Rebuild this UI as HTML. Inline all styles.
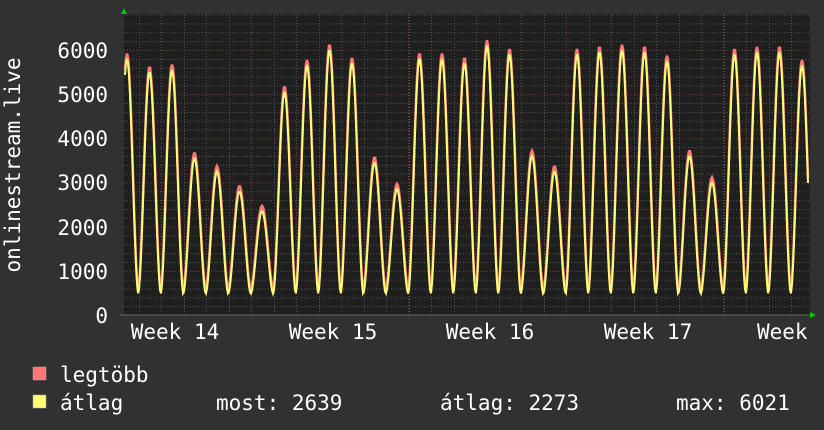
<!DOCTYPE html><html><head><meta charset="utf-8"><style>
body{margin:0;background:#313131;width:824px;height:430px;overflow:hidden}
svg{display:block}
text{font-family:"DejaVu Sans Mono","Liberation Mono",monospace;fill:#fff;font-size:21px}
</style></head><body>
<svg id="s" width="824" height="430" xmlns="http://www.w3.org/2000/svg">
<rect x="0" y="0" width="824" height="430" fill="#313131"/>
<rect x="124" y="14" width="686" height="301" fill="#1f1f1f"/>
<g id="grid"></g>
<g id="data"></g>
<polygon points="121,14 127,14 124,8" fill="#0c0"/>
<polygon points="810,312 810,318 816,315" fill="#0c0"/>
<line x1="120" y1="315" x2="810" y2="315" stroke="#666"/>
<g text-anchor="end">
<text x="108" y="58">6000</text><text x="108" y="102">5000</text><text x="108" y="146">4000</text>
<text x="108" y="190">3000</text><text x="108" y="235">2000</text><text x="108" y="279">1000</text>
<text x="108" y="323">0</text></g>
<text transform="translate(20,165) rotate(-90)" text-anchor="middle">onlinestream.live</text>
<g text-anchor="middle"><text x="175" y="339">Week 14</text><text x="333" y="339">Week 15</text>
<text x="490" y="339">Week 16</text><text x="648" y="339">Week 17</text></g>
<text x="757" y="339">Week</text>
<rect x="33" y="367" width="13" height="13" fill="#ff7777" stroke="#aaa" stroke-width="0.5"/>
<rect x="33" y="395" width="13" height="13" fill="#ffff77" stroke="#aaa" stroke-width="0.5"/>
<text x="60" y="382">legtöbb</text>
<text x="60" y="410">átlag</text>
<text x="216" y="410">most: 2639</text>
<text x="440" y="410">átlag: 2273</text>
<text x="676" y="410">max: 6021</text>
</svg>
<script>
var NS="http://www.w3.org/2000/svg",g=document.getElementById("grid"),d=document.getElementById("data");
function L(x1,y1,x2,y2,c,da){var l=document.createElementNS(NS,"line");l.setAttribute("x1",x1);l.setAttribute("y1",y1);l.setAttribute("x2",x2);l.setAttribute("y2",y2);l.setAttribute("stroke",c);if(da)l.setAttribute("stroke-dasharray",da);g.appendChild(l);}
for(var v=200;v<=6800;v+=200){var y=315-v*0.04417;if(y<14)break;L(124,y+.5,810,y+.5,v%1000?"#555":"#803a3a","1,2");}
for(var x=116;x<810;x+=22.5){var xx=Math.round(x)+.5;if(xx<124)continue;L(xx,14,xx,315,"#555","1,2");}
[251,408,566,723].forEach(function(x){L(x+.5,14,x+.5,318,"#803a3a","1,2");});
var peaks=[5.8,5.5,5.55,3.55,3.25,2.8,2.35,5.05,5.65,6.0,5.7,3.45,2.85,5.8,5.8,5.7,6.1,5.9,3.6,3.25,5.9,5.95,6.0,5.95,5.75,3.6,3.0,5.9,5.95,5.95,5.65];
function val(x){var t=(x-127)/22.5,i=Math.round(t);var f=t-i;var p=peaks[Math.max(0,Math.min(peaks.length-1,i))]*1000;var s=Math.pow((1+Math.cos(2*Math.PI*f))/2,0.9);return 480+(p-480)*s;}
var py="",pr="";for(var x=125;x<=808;x+=1){var v=val(x);py+=(x==125?"M":"L")+x+","+(315-v*0.04417).toFixed(1);pr+=(x==125?"M":"L")+x+","+(315-(v+120)*0.04417).toFixed(1);}
function P(dd,c,w){var p=document.createElementNS(NS,"path");p.setAttribute("d",dd);p.setAttribute("stroke",c);p.setAttribute("stroke-width",w);p.setAttribute("fill","none");d.appendChild(p);}
P(pr,"#ff7777",2.5);P(py,"#ffff77",2);
</script>
</body></html>
